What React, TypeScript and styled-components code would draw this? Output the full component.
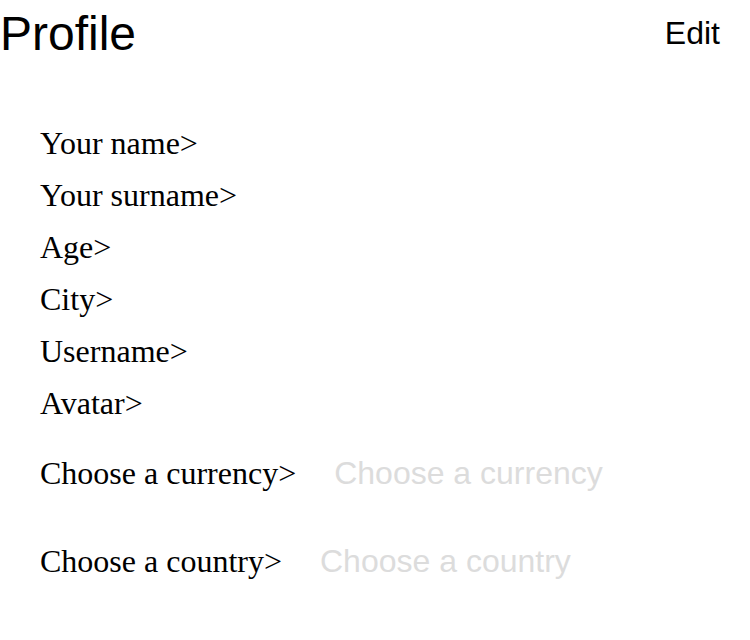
import React from 'react';
import styled, {createGlobalStyle} from 'styled-components';

const GlobalStyle = createGlobalStyle`
  html, body {
    margin: 0;
    padding: 0;
    background: #ffffff;
  }
`

const Page = styled.div`
  width: 750px;
  min-height: 640px;
  font-family: "Liberation Serif", serif;
  color: #000;
`

const Header = styled.header`
  display: flex;
  justify-content: space-between;
  align-items: center;
  padding: 7px 30px 0 0;
`

const Title = styled.h1`
  margin: 0;
  font-family: "Liberation Sans", Arial, sans-serif;
  font-weight: 400;
  font-size: 48px;
  line-height: 53px;
`

const EditButton = styled.span`
  font-family: "Liberation Sans", Arial, sans-serif;
  font-size: 32px;
  cursor: pointer;
`

const List = styled.div`
  display: flex;
  flex-direction: column;
  padding: 57px 0 0 40px;
`

const Row = styled.div`
  display: flex;
  align-items: center;
  height: 52px;
  font-size: 32px;
`

const SelectRow = styled(Row)<{ $height: number }>`
  height: ${p => p.$height}px;
  gap: 38px;
`

const Placeholder = styled.span`
  font-family: "Liberation Sans", Arial, sans-serif;
  font-size: 32px;
  color: #dcdcdc;
`

const fields = ['Your name', 'Your surname', 'Age', 'City', 'Username', 'Avatar']

const App: React.FC = () => {
    return (
        <Page>
            <GlobalStyle/>
            <Header>
                <Title>Profile</Title>
                <EditButton>Edit</EditButton>
            </Header>
            <List>
                {fields.map(name => <Row key={name}>{name}&gt;</Row>)}
                <SelectRow $height={88}>
                    <span>Choose a currency&gt;</span>
                    <Placeholder>Choose a currency</Placeholder>
                </SelectRow>
                <SelectRow $height={88}>
                    <span>Choose a country&gt;</span>
                    <Placeholder>Choose a country</Placeholder>
                </SelectRow>
            </List>
        </Page>
    );
}

export default App
